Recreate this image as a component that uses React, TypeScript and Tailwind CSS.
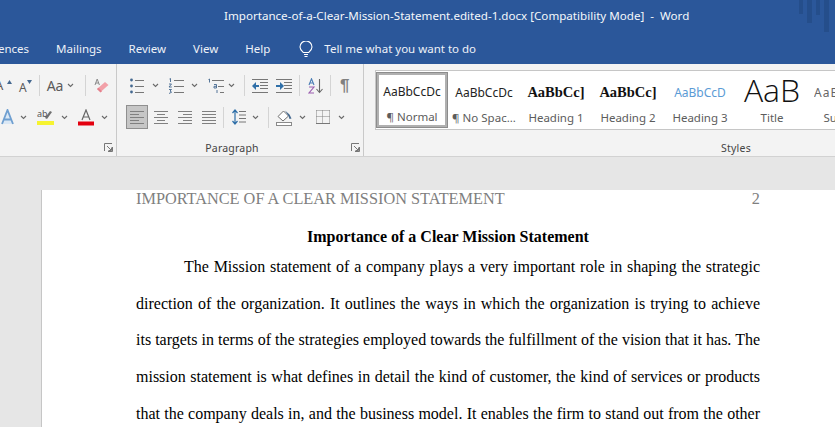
import React from "react";

const UI_FONT = "font-['Noto_Sans','Open_Sans',sans-serif]";

function Chevron({ className = "" }: { className?: string }) {
  return (
    <svg width="7" height="5" viewBox="0 0 7 5" className={"shrink-0 " + className}>
      <path d="M1 1l2.5 2.5L6 1" fill="none" stroke="#6a6a6a" strokeWidth="1.1" />
    </svg>
  );
}

function Sep({ className = "" }: { className?: string }) {
  return <div className={"w-px h-[21px] bg-[#d4d4d4] shrink-0 " + className} />;
}

function Launcher({ className = "" }: { className?: string }) {
  return (
    <svg width="9" height="9" viewBox="0 0 9 9" className={"shrink-0 " + className}>
      <path d="M.5 8V.5H8M8.5 4v4.5H4M3 3l4 4M7.5 4.5v3h-3" fill="none" stroke="#777" strokeWidth="1" />
    </svg>
  );
}

function AlignIcon({ kind, className = "" }: { kind: "left" | "center" | "right" | "justify"; className?: string }) {
  const rows = [0, 3, 6, 9, 12];
  const x: Record<string, number[][]> = {
    left: [[0, 14], [0, 9], [0, 14], [0, 9], [0, 14]],
    center: [[0, 14], [3, 11], [0, 14], [3, 11], [0, 14]],
    right: [[0, 14], [5, 14], [0, 14], [5, 14], [0, 14]],
    justify: [[0, 14], [0, 14], [0, 14], [0, 14], [0, 14]],
  };
  return (
    <svg width="14" height="13" viewBox="0 0 14 13" className={"shrink-0 " + className}>
      {rows.map((y, i) => (
        <path key={y} d={`M${x[kind][i][0]} ${y + 0.5}H${x[kind][i][1]}`} stroke="#808080" />
      ))}
    </svg>
  );
}

function Bullets() {
  return (
    <svg width="14" height="16" viewBox="0 0 14 16" className="shrink-0 ml-[13px]">
      <circle cx="1.5" cy="2" r="1.4" fill="#44688f" />
      <circle cx="1.5" cy="8" r="1.4" fill="#44688f" />
      <circle cx="1.5" cy="14" r="1.4" fill="#44688f" />
      <path d="M5 2.5H14M5 8.5H14M5 14.5H14" stroke="#777" />
    </svg>
  );
}

function Numbering() {
  return (
    <svg width="16" height="16" viewBox="0 0 16 16" className="shrink-0 ml-[9px]">
      <path d="M1.5 1l1-.5V4M1 6h2.5L1 9h2.8M1 11.5h2.5L2 13l1.6 1.2L1 15.5" fill="none" stroke="#44688f" strokeWidth=".9" />
      <path d="M6 2.5H16M6 8.5H16M6 14.5H16" stroke="#777" />
    </svg>
  );
}

function Multilevel() {
  return (
    <svg width="17" height="16" viewBox="0 0 17 16" className="shrink-0 ml-[9px]">
      <path d="M1.5 1.5l1-.5v3.5M7 6.5h2.5V10H7V8.3h2.5M10 12v3" fill="none" stroke="#44688f" strokeWidth=".9" />
      <path d="M5 2.5H17M11 8.5H17M13 14.5H17" stroke="#777" />
    </svg>
  );
}

function Indent({ flip, className = "" }: { flip?: boolean; className?: string }) {
  return (
    <svg width="16" height="14" viewBox="0 0 16 14" className={"shrink-0 " + className}>
      <path d="M0 .5H16M8 3.5H16M8 6.5H16M8 9.5H16M0 13.5H16" stroke="#777" />
      {flip ? (
        <path d="M0 6H4V3l4 4-4 4V8H0z" fill="#2f6fa8" />
      ) : (
        <path d="M7 6H4V3L0 7l4 4V8H7z" fill="#2f6fa8" />
      )}
    </svg>
  );
}

function Sort() {
  return (
    <svg width="15" height="16" viewBox="0 0 15 16" className="shrink-0 ml-[8px]">
      <path d="M1 7L3.5.8 6 7M1.8 5h3.4" fill="none" stroke="#4a7db5" strokeWidth="1.1" />
      <path d="M1 9h5L1 15h5" fill="none" stroke="#9b5fb0" strokeWidth="1.1" />
      <path d="M11.5 1v13M8.5 11l3 3.5 3-3.5" fill="none" stroke="#666" strokeWidth="1.1" />
    </svg>
  );
}

function Pilcrow() {
  return <span className="ml-[9px] w-[12px] text-[17px] leading-none text-[#808080] font-['Liberation_Sans',sans-serif] font-bold">¶</span>;
}

function LineSpacing() {
  return (
    <svg width="14" height="16" viewBox="0 0 14 16" className="shrink-0 ml-[8px]">
      <path d="M3 1v14M.5 4L3 1l2.5 3M.5 12L3 15l2.5-3" fill="none" stroke="#2f6fa8" strokeWidth="1.2" />
      <path d="M7 2.5H14M7 6H14M7 9.5H14M7 13H14" stroke="#777" />
    </svg>
  );
}

function Shading() {
  return (
    <svg width="17" height="17" viewBox="0 0 17 17" className="shrink-0 ml-[7px]">
      <path d="M2 7.5L7.5 2l5 5L7 12z" fill="#fff" stroke="#707070" />
      <path d="M9 1.5l4.5 4 2 4-2 .5-1-3z" fill="#44688f" />
      <rect x=".5" y="13.5" width="15" height="3" fill="#fff" stroke="#8a8a8a" />
    </svg>
  );
}

function Borders() {
  return (
    <svg width="14" height="14" viewBox="0 0 14 14" className="shrink-0 ml-[10px]">
      <path d="M.5 .5H13.5M.5 6.5H13.5M.5 .5V13M6.5 .5V13M13.5 .5V13" fill="none" stroke="#808080" strokeDasharray="1 1" />
      <path d="M0 13.5H14" stroke="#777" />
    </svg>
  );
}

function FontGroup() {
  return (
    <div className="w-[117px] shrink-0 h-full relative border-r border-[#c9c9c9] overflow-hidden">
      <div className="h-[21px] mt-[11px] flex items-center -ml-[5px]">
        <span className="w-[12px] text-[13px] leading-none text-[#5a5a5a] font-['Noto_Sans',sans-serif]">A</span>
        <svg width="5" height="4" viewBox="0 0 5 4" className="-mt-[8px] shrink-0"><path d="M0 4l2.5-4L5 4z" fill="#44688f" /></svg>
        <span className="ml-[7px] text-[12px] mt-[4px] leading-none text-[#5a5a5a] font-['Noto_Sans',sans-serif]">A</span>
        <svg width="5" height="4" viewBox="0 0 5 4" className="-mt-[8px] shrink-0"><path d="M0 0l2.5 4L5 0z" fill="#44688f" /></svg>
        <Sep className="ml-[7px]" />
        <span className="ml-[7px] w-[17px] text-[14px] leading-none text-[#5a5a5a] font-['Noto_Sans',sans-serif]">Aa</span>
        <Chevron className="ml-[3px]" />
        <Sep className="ml-[11px]" />
        <svg width="16" height="16" viewBox="0 0 16 16" className="shrink-0 ml-[8px]">
          <path d="M1 7L3.2 1l2.2 6M1.8 5h2.8" fill="none" stroke="#8a8a8a" />
          <path d="M6.5 14l8-7-3.5-3-8 7z" fill="#f2a0a8" />
          <path d="M3 11l3.5 3.5L8 13.2 4.5 9.7z" fill="#e5808c" />
        </svg>
      </div>
      <div className="h-[24px] mt-[9px] flex items-center">
        <svg width="15" height="16" viewBox="0 0 15 16" className="shrink-0">
          <path d="M2 15L7.5 1 13 15M4 10.5h7" fill="#dbe8f5" stroke="#6f9fd0" strokeWidth="1.8" />
        </svg>
        <Chevron className="ml-[5px]" />
        <svg width="17" height="18" viewBox="0 0 17 18" className="shrink-0 ml-[10px]">
          <rect x="0" y="13" width="17" height="4" fill="#f6f330" />
          <path d="M10 11l5-7-2-1-5 7z" fill="#707070" />
          <text x="0" y="9" fontSize="9" fill="#555" fontFamily="Noto Sans">ab</text>
        </svg>
        <Chevron className="ml-[7px]" />
        <svg width="16" height="17" viewBox="0 0 16 17" className="shrink-0 ml-[10px]">
          <path d="M4 11L8 1l4 10M5.5 8h5" fill="none" stroke="#666" strokeWidth="1.2" />
          <rect x="0" y="12.5" width="16" height="4" fill="#e3000f" />
        </svg>
        <Chevron className="ml-[7px]" />
      </div>
      <Launcher className="absolute right-[3px] bottom-[4px]" />
    </div>
  );
}

function ParagraphGroup() {
  return (
    <div className="w-[247px] shrink-0 h-full relative border-r border-[#c9c9c9]">
      <div className="h-[21px] mt-[11px] flex items-center">
        <Bullets />
        <Chevron className="ml-[8px]" />
        <Numbering />
        <Chevron className="ml-[7px]" />
        <Multilevel />
        <Chevron className="ml-[4px]" />
        <Sep className="ml-[9px]" />
        <Indent className="ml-[7px]" />
        <Indent flip className="ml-[8px]" />
        <Sep className="ml-[7px]" />
        <Sort />
        <Sep className="ml-[7px]" />
        <Pilcrow />
      </div>
      <div className="h-[24px] mt-[9px] flex items-center">
        <div className="ml-[9px] w-[22px] h-[24px] bg-[#c6c6c6] border border-[#8f8f8f] flex items-center justify-center shrink-0">
          <AlignIcon kind="left" />
        </div>
        <AlignIcon kind="center" className="ml-[6px]" />
        <AlignIcon kind="right" className="ml-[10px]" />
        <AlignIcon kind="justify" className="ml-[10px]" />
        <Sep className="ml-[7px]" />
        <LineSpacing />
        <Chevron className="ml-[6px]" />
        <Sep className="ml-[9px]" />
        <Shading />
        <Chevron className="ml-[6px]" />
        <Borders />
        <Chevron className="ml-[8px]" />
      </div>
      <div className={"absolute left-0 right-[16px] bottom-0 text-center text-[10.5px] leading-[15px] tracking-[0.2px] text-[#444] " + UI_FONT}>Paragraph</div>
      <Launcher className="absolute right-[3px] bottom-[4px]" />
    </div>
  );
}

const styles = [
  { preview: "AaBbCcDc", label: "¶ Normal", cls: "text-[12px] text-[#222] " + UI_FONT, box: "justify-center" },
  { preview: "AaBbCcDc", label: "¶ No Spac...", cls: "text-[12px] text-[#222] " + UI_FONT, box: "justify-center" },
  { preview: "AaBbCc]", label: "Heading 1", cls: "text-[14.5px] font-bold text-[#111] font-['Liberation_Serif',serif]", box: "justify-center" },
  { preview: "AaBbCc]", label: "Heading 2", cls: "text-[14.5px] font-bold text-[#111] font-['Liberation_Serif',serif]", box: "justify-center" },
  { preview: "AaBbCcD", label: "Heading 3", cls: "text-[12px] text-[#5b9bd5] " + UI_FONT, box: "justify-center" },
  { preview: "AaB", label: "Title", cls: "text-[32px] -mt-[5px] text-[#111] font-light font-['Open_Sans',sans-serif]", box: "justify-center" },
  { preview: "AaBbCcDd", label: "Subtitle", cls: "text-[12px] tracking-[1px] text-[#666] " + UI_FONT, box: "justify-start" },
];

function StylesGroup() {
  return (
    <div className="flex-1 min-w-0 h-full relative pl-[11px]">
      <div className="mt-[6px] h-[60px] bg-white border border-[#c6c6c6] flex overflow-hidden -mr-[80px]">
        {styles.map((s, i) => (
          <div
            key={i}
            className={
              "w-[72px] shrink-0 flex flex-col items-center overflow-hidden " +
              (i === 0
                ? "mt-px h-[56px] border-[3px] border-[#b0b0b0] outline outline-1 -outline-offset-1 outline-[#8c8c8c] pt-[3px]"
                : "h-full pt-[7px]")
            }
          >
            <div className={"h-[29px] w-[60px] flex items-center overflow-hidden whitespace-nowrap " + s.box}>
              <span className={"leading-none " + s.cls}>{s.preview}</span>
            </div>
            <div className={"mt-[3px] text-[11.5px] leading-[16px] whitespace-nowrap text-[#5c5c5c] " + UI_FONT}>{s.label}</div>
          </div>
        ))}
      </div>
      <div className={"absolute left-[327px] w-[90px] bottom-0 text-center text-[10.5px] leading-[15px] tracking-[0.2px] text-[#444] " + UI_FONT}>Styles</div>
    </div>
  );
}

const tabs = [
  { t: "ences", cls: "-ml-[31px] pl-[29px]" },
  { t: "Mailings", cls: "ml-[27px]" },
  { t: "Review", cls: "ml-[27px]" },
  { t: "View", cls: "ml-[27px]" },
  { t: "Help", cls: "ml-[27px]" },
];

const bodyLines = [
  "direction of the organization. It outlines the ways in which the organization is trying to achieve",
  "its targets in terms of the strategies employed towards the fulfillment of the vision that it has. The",
  "mission statement is what defines in detail the kind of customer, the kind of services or products",
  "that the company deals in, and the business model. It enables the firm to stand out from the other",
];

export default function App() {
  return (
    <div className="w-[835px] h-[427px] overflow-hidden flex flex-col bg-[#e6e6e6]">
      <div className={"relative h-[64px] shrink-0 bg-[#2b579a] text-white " + UI_FONT}>
        <div className="h-[32px] pl-[224px] flex items-center text-[11.6px] whitespace-pre text-[#f4f7fb]">
          Importance-of-a-Clear-Mission-Statement.edited-1.docx [Compatibility Mode]  -  Word
        </div>
        <div className="h-[32px] flex items-center text-[11.5px] pt-[2px] whitespace-nowrap text-[#eef2f8]">
          {tabs.map((tab) => (
            <span key={tab.t} className={tab.cls}>{tab.t}</span>
          ))}
          <svg width="14" height="17" viewBox="0 0 14 17" className="ml-[29px] shrink-0">
            <path d="M4.5 11.5C3 10 1 8.6 1 6a6 6 0 0 1 12 0c0 2.6-2 4-3.5 5.5z M5 13.5h4M5.5 15.5h3" fill="none" stroke="#fff" strokeWidth="1.1" />
          </svg>
          <span className="ml-[11px]">Tell me what you want to do</span>
        </div>
        <svg width="37" height="32" viewBox="0 0 37 32" className="absolute right-0 top-0">
          <g fill="#234b87" opacity=".75">
            <rect x="1" y="0" width="4" height="14" />
            <rect x="9" y="0" width="5" height="23" />
            <rect x="18" y="0" width="4" height="15" />
            <rect x="26" y="0" width="5" height="32" />
          </g>
        </svg>
      </div>

      <div className="h-[93px] shrink-0 bg-[#f3f3f3] border-b border-[#d2d2d2] flex overflow-hidden">
        <FontGroup />
        <ParagraphGroup />
        <StylesGroup />
      </div>

      <div className="flex-1 min-h-0 pt-[33px] pl-[41px]">
        <div className="h-full bg-white border-l border-[#c6c6c6] pl-[94px] pr-[75px] font-['Liberation_Serif',serif] text-black text-[16px]">
          <div className="flex justify-between text-[#7f7f7f] text-[16.3px] leading-[18px]">
            <span>IMPORTANCE OF A CLEAR MISSION STATEMENT</span>
            <span>2</span>
          </div>
          <div className="mt-[20px] text-center font-bold leading-[18px]">Importance of a Clear Mission Statement</div>
          <div className="mt-[12px] pl-[48px] leading-[18px] text-justify [text-align-last:justify]">
            The Mission statement of a company plays a very important role in shaping the strategic
          </div>
          {bodyLines.map((line) => (
            <div key={line} className="mt-[18.7px] leading-[18px] whitespace-nowrap text-justify [text-align-last:justify]">
              {line}
            </div>
          ))}
        </div>
      </div>
    </div>
  );
}
